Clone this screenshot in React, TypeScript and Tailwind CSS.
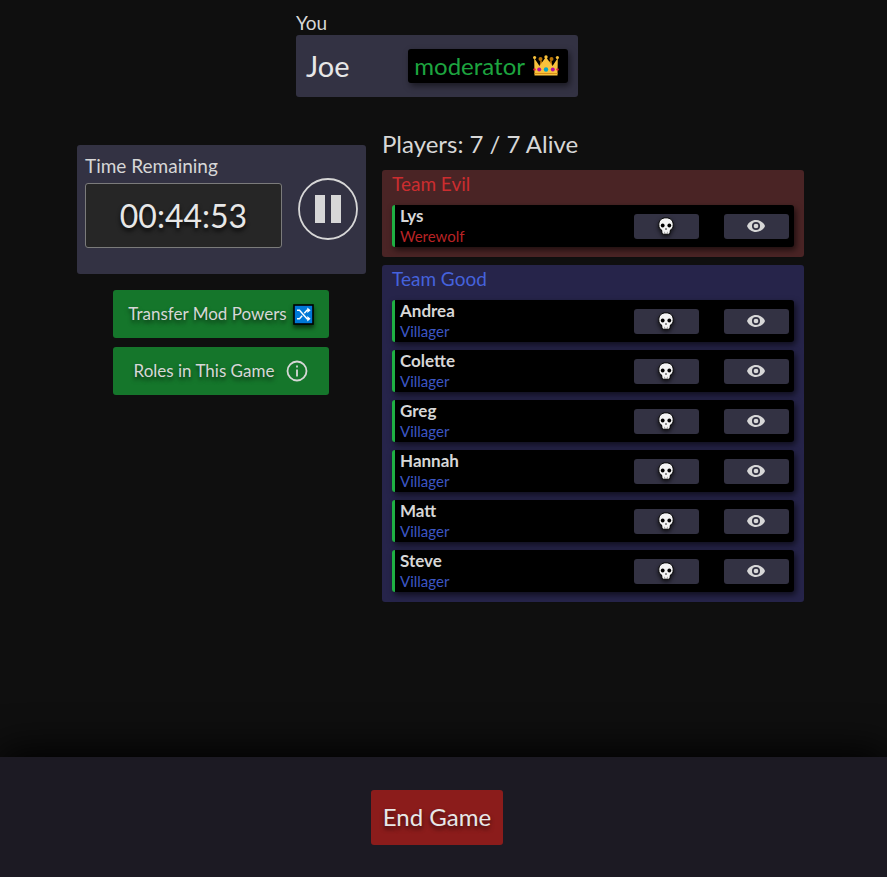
type Player = { name: string; role: string };
type Side = 'evil' | 'good';

const evil: Player[] = [{ name: 'Lys', role: 'Werewolf' }];
const good: Player[] = ['Andrea', 'Colette', 'Greg', 'Hannah', 'Matt', 'Steve'].map((name) => ({
  name,
  role: 'Villager',
}));

const sides = {
  evil: { title: 'Team Evil', panel: 'bg-[#4a2425]', heading: 'text-[#cc2d2f]', role: 'text-[#b82325]' },
  good: { title: 'Team Good', panel: 'bg-[#26244a]', heading: 'text-[#4562dc]', role: 'text-[#3c56c4]' },
};

function Crown() {
  return (
    <svg viewBox="0 0 26 22" className="h-[22px] w-[26px] shrink-0" aria-hidden="true">
      <path d="M6 16 7.5 4.500 12 11 18.500 4.500 20 16z" fill="#b87305" />
      <circle cx="7.500" cy="4" r="2" fill="#b87305" />
      <circle cx="18.500" cy="4" r="2" fill="#b87305" />
      <path d="M1.200 3 6.500 11 12.900 2 19.500 11 24.800 3 24.500 20.500H1.500z" fill="#f9c23c" />
      <circle cx="1.600" cy="2.500" r="1.600" fill="#f9c23c" />
      <circle cx="13" cy="2" r="1.700" fill="#f9c23c" />
      <circle cx="24.400" cy="2.500" r="1.600" fill="#f9c23c" />
      <path d="M1.500 18.500h23" stroke="#d98f16" strokeWidth="1" />
      <circle cx="6.200" cy="14.500" r="2" fill="#b4109f" />
      <circle cx="13" cy="14.500" r="2.200" fill="#00a6c8" />
      <circle cx="19.800" cy="14.500" r="2" fill="#b4109f" />
      <circle cx="1.500" cy="14.500" r="1.200" fill="#e0243d" />
      <circle cx="24.500" cy="14.500" r="1.200" fill="#e0243d" />
    </svg>
  );
}

function Shuffle() {
  return (
    <svg viewBox="0 0 21 21" className="size-[21px] shrink-0 drop-shadow-[0_3px_2px_rgba(0,0,0,0.6)]" aria-hidden="true">
      <rect x="1" y="1" width="19" height="19" fill="#0078d7" stroke="#000" strokeWidth="1.600" />
      <path
        d="M4 6.200h2.500L14 14.800h2M4 14.800h2.500l2.700-3.100M11.300 9.300 14 6.200h2"
        fill="none"
        stroke="#fff"
        strokeWidth="1.400"
      />
      <path d="M14.300 3.500 17.600 6.200l-3.300 2.700zM14.300 12.100l3.300 2.700-3.300 2.700z" fill="#fff" />
    </svg>
  );
}

function Info() {
  return (
    <svg viewBox="0 0 22 22" className="size-[22px] shrink-0" fill="none" stroke="#d7d7d7" aria-hidden="true">
      <circle cx="11" cy="11" r="9.500" strokeWidth="1.800" />
      <path d="M11 9.500v7M11 5.500v2" strokeWidth="1.800" />
    </svg>
  );
}

function Skull() {
  return (
    <svg viewBox="0 0 18 20" className="mr-[2px] h-5 w-[18px] drop-shadow-[0_2px_2px_rgba(0,0,0,0.7)]" aria-hidden="true">
      <path
        d="M9 1.800C4.500 1.800 1.800 4.700 1.800 8.500c0 1.700.2 3 .8 4 .6.900 1.700.6 2 1.600l.4 2.700c.1.900.6 1.400 1.300 1.400h5.400c.7 0 1.200-.5 1.300-1.400l.4-2.700c.3-1 1.400-.7 2-1.600.6-1 .8-2.300.8-4C16.200 4.700 13.500 1.800 9 1.800z"
        fill="#f4f4f4"
        stroke="#000"
        strokeWidth="1"
      />
      <circle cx="5.700" cy="9.500" r="1.900" fill="#000" />
      <circle cx="12.300" cy="9.500" r="1.900" fill="#000" />
      <path d="M9 11.800 8 13.600h2z" fill="#000" />
      <path d="M7.600 15.800v2M10.400 15.800v2" stroke="#888" strokeWidth=".7" />
    </svg>
  );
}

function Eye() {
  return (
    <svg viewBox="0 0 18 12" className="mr-[2px] h-3 w-[18px]" aria-hidden="true">
      <path
        d="M9 0C4.900 0 1.400 2.500 0 6c1.400 3.500 4.900 6 9 6s7.600-2.500 9-6c-1.400-3.500-4.900-6-9-6z"
        fill="#d7d7d7"
      />
      <circle cx="9" cy="6" r="3.200" fill="#d7d7d7" stroke="#333243" strokeWidth="1.700" />
    </svg>
  );
}

function PlayerRow({ player, side }: { player: Player; side: Side }) {
  return (
    <li className="flex h-[42px] items-start rounded-[3px] border-l-[3px] border-[#1fb043] bg-black px-[5px] shadow-[2px_3px_6px_rgba(0,0,0,0.6)]">
      <div className="flex-1">
        <div className="text-[17px] leading-[22px] font-bold text-[#d7d7d7]">{player.name}</div>
        <div className={`text-[15px] leading-[18px] ${sides[side].role}`}>{player.role}</div>
      </div>
      <div className="flex gap-[25px] self-center">
        <button
          type="button"
          aria-label={`Kill ${player.name}`}
          className="flex h-[25px] w-[65px] items-center justify-center rounded-[3px] bg-[#333243]"
        >
          <Skull />
        </button>
        <button
          type="button"
          aria-label={`Reveal ${player.name}`}
          className="flex h-[25px] w-[65px] items-center justify-center rounded-[3px] bg-[#333243]"
        >
          <Eye />
        </button>
      </div>
    </li>
  );
}

function Team({ side, players }: { side: Side; players: Player[] }) {
  const look = sides[side];
  return (
    <section className={`rounded-[3px] px-[10px] pb-[10px] ${look.panel}`}>
      <h3 className={`pb-[7px] text-[19px] leading-[28px] ${look.heading}`}>{look.title}</h3>
      <ul className="flex flex-col gap-2">
        {players.map((player) => (
          <PlayerRow key={player.name} player={player} side={side} />
        ))}
      </ul>
    </section>
  );
}

const greenButton =
  'flex h-12 w-[216px] items-center justify-center rounded-[3px] bg-[#15762b] text-[17px] text-[#d7d7d7] [text-shadow:0_3px_4px_rgba(0,0,0,0.6)]';

export default function App() {
  return (
    <div className="flex min-h-screen flex-col bg-[#0f0f0f] font-['Lato','Noto_Sans',sans-serif] text-[#d7d7d7]">
      <header className="flex justify-center pt-[10px] pr-[13px]">
        <div className="w-[282px]">
          <div className="text-[19px] leading-[25px]">You</div>
          <div className="flex h-[62px] items-center justify-between rounded-[3px] bg-[#333243] px-[10px]">
            <span className="text-[29px] text-[#e7e7e7]">Joe</span>
            <span className="flex h-[34px] items-center gap-[8px] rounded-[3px] bg-black pr-[9px] pl-[6px] text-[24px] text-[#1da43f] shadow-[2px_3px_6px_rgba(0,0,0,0.5)]">
              moderator
              <Crown />
            </span>
          </div>
        </div>
      </header>

      <main className="flex flex-wrap items-start justify-center gap-4 pt-[33px] pr-[6px] pb-8">
        <div className="flex w-[289px] flex-col items-center pt-[15px]">
          <section className="flex h-[129px] w-full items-start justify-between rounded-[3px] bg-[#333243] px-2 pt-2">
            <div>
              <div className="pb-[5px] text-[19px] leading-[25px]">Time Remaining</div>
              <div className="flex h-[65px] w-[197px] items-center justify-center rounded-[3px] border border-[#7b7b7b] bg-[#262626] text-[32px] text-[#e7e7e7] [text-shadow:0_3px_4px_rgba(0,0,0,0.8)]">
                00:44:53
              </div>
            </div>
            <button type="button" aria-label="Pause timer" className="mt-[25px]">
              <svg viewBox="0 0 60 62" className="h-[62px] w-[60px]" aria-hidden="true">
                <ellipse cx="30" cy="31" rx="29" ry="30" fill="none" stroke="#d7d7d7" strokeWidth="1.800" />
                <path d="M17 17h10v28H17zM33 17h10v28H33z" fill="#d7d7d7" />
              </svg>
            </button>
          </section>
          <div className="flex flex-col gap-[9px] pt-4 pr-px">
            <button type="button" className={`${greenButton} gap-[6px]`}>
              Transfer Mod Powers
              <Shuffle />
            </button>
            <button type="button" className={`${greenButton} gap-3`}>
              Roles in This Game
              <Info />
            </button>
          </div>
        </div>

        <div className="w-[422px]">
          <h2 className="pb-[12px] text-[24px] leading-[28px]">Players: 7 / 7 Alive</h2>
          <div className="flex flex-col gap-2">
            <Team side="evil" players={evil} />
            <Team side="good" players={good} />
          </div>
        </div>
      </main>

      <footer className="mt-auto flex h-[120px] items-center justify-center bg-[#1c1a23] pr-[13px] shadow-[0_-6px_40px_#000]">
        <button
          type="button"
          className="h-[55px] w-[132px] rounded-[3px] bg-[#8b1c1b] text-[24px] text-[#e7e7e7] [text-shadow:0_3px_4px_rgba(0,0,0,0.6)]"
        >
          End Game
        </button>
      </footer>
    </div>
  );
}
